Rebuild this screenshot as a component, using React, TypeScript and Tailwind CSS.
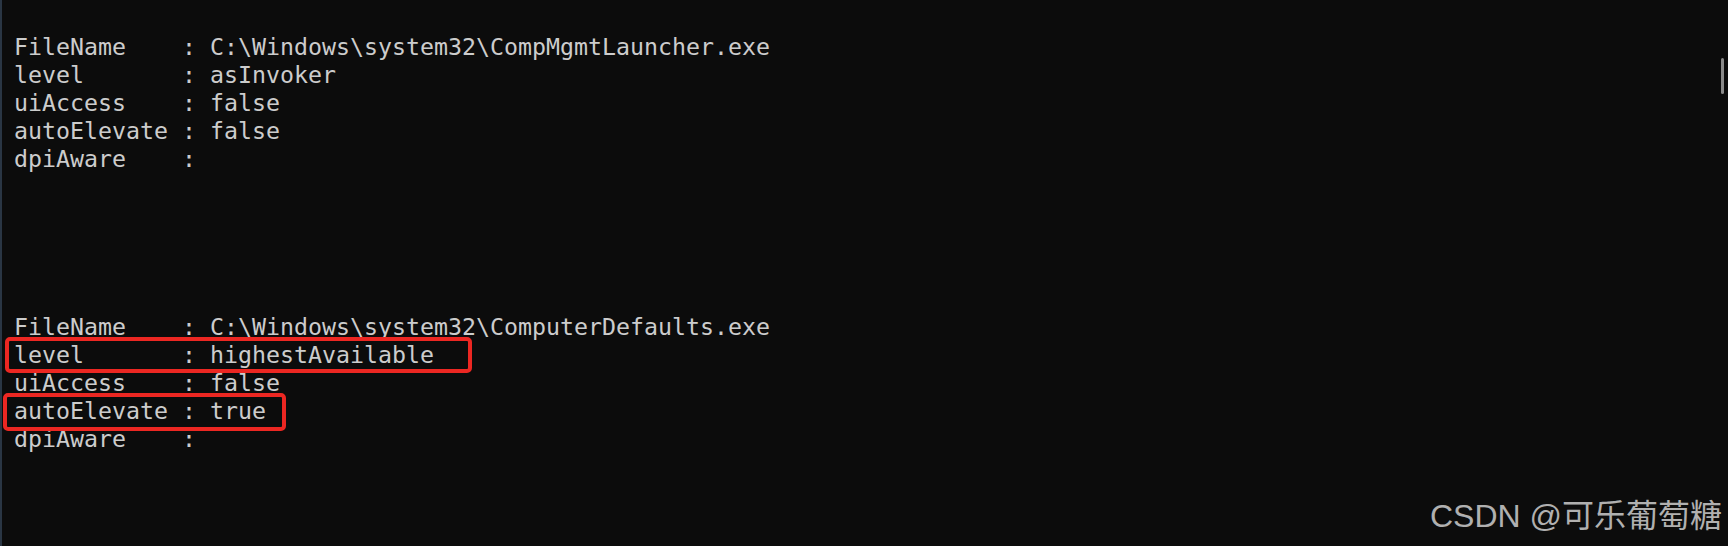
import React from 'react';

// two Get-Manifest dumps, blank lines in between like the console output
const LINES = [
  '',
  'FileName    : C:\\Windows\\system32\\CompMgmtLauncher.exe',
  'level       : asInvoker',
  'uiAccess    : false',
  'autoElevate : false',
  'dpiAware    :',
  '',
  '',
  '',
  '',
  '',
  'FileName    : C:\\Windows\\system32\\ComputerDefaults.exe',
  'level       : highestAvailable',
  'uiAccess    : false',
  'autoElevate : true',
  'dpiAware    :',
  '',
  '',
];

export default function App() {
  return (
    <div className="relative w-full h-[546px] overflow-hidden bg-[#0c0c0c] flex">
      {/* window edge */}
      <div className="w-[2px] h-full bg-[#2a3644] shrink-0" />

      <div
        className="flex-1 pt-[5px] pl-[12px] text-[#cccccc] text-[23.25px] leading-[28px]"
        style={{ fontFamily: '"DejaVu Sans Mono", "Liberation Mono", monospace' }}
      >
        {LINES.map((line, i) => (
          <div key={i} className="whitespace-pre h-[28px]">
            {line}
          </div>
        ))}
      </div>

      {/* red highlight boxes */}
      <div className="absolute left-[5px] top-[337px] w-[467px] h-[36px] border-4 border-[#ec2722] rounded-[5px]" />
      <div className="absolute left-[3px] top-[393px] w-[283px] h-[38px] border-4 border-[#ec2722] rounded-[5px]" />

      {/* scrollbar thumb */}
      <div className="absolute left-[1721px] top-[58px] w-[3px] h-[36px] rounded-full bg-[#8a8a8a]" />

      {/* watermark */}
      <div
        className="absolute right-[6px] bottom-[14px] text-[32px] leading-none text-[#b0b0b0] whitespace-nowrap"
        style={{ fontFamily: '"Liberation Sans", "Noto Sans CJK SC", sans-serif' }}
      >
        CSDN @可乐葡萄糖
      </div>
    </div>
  );
}
